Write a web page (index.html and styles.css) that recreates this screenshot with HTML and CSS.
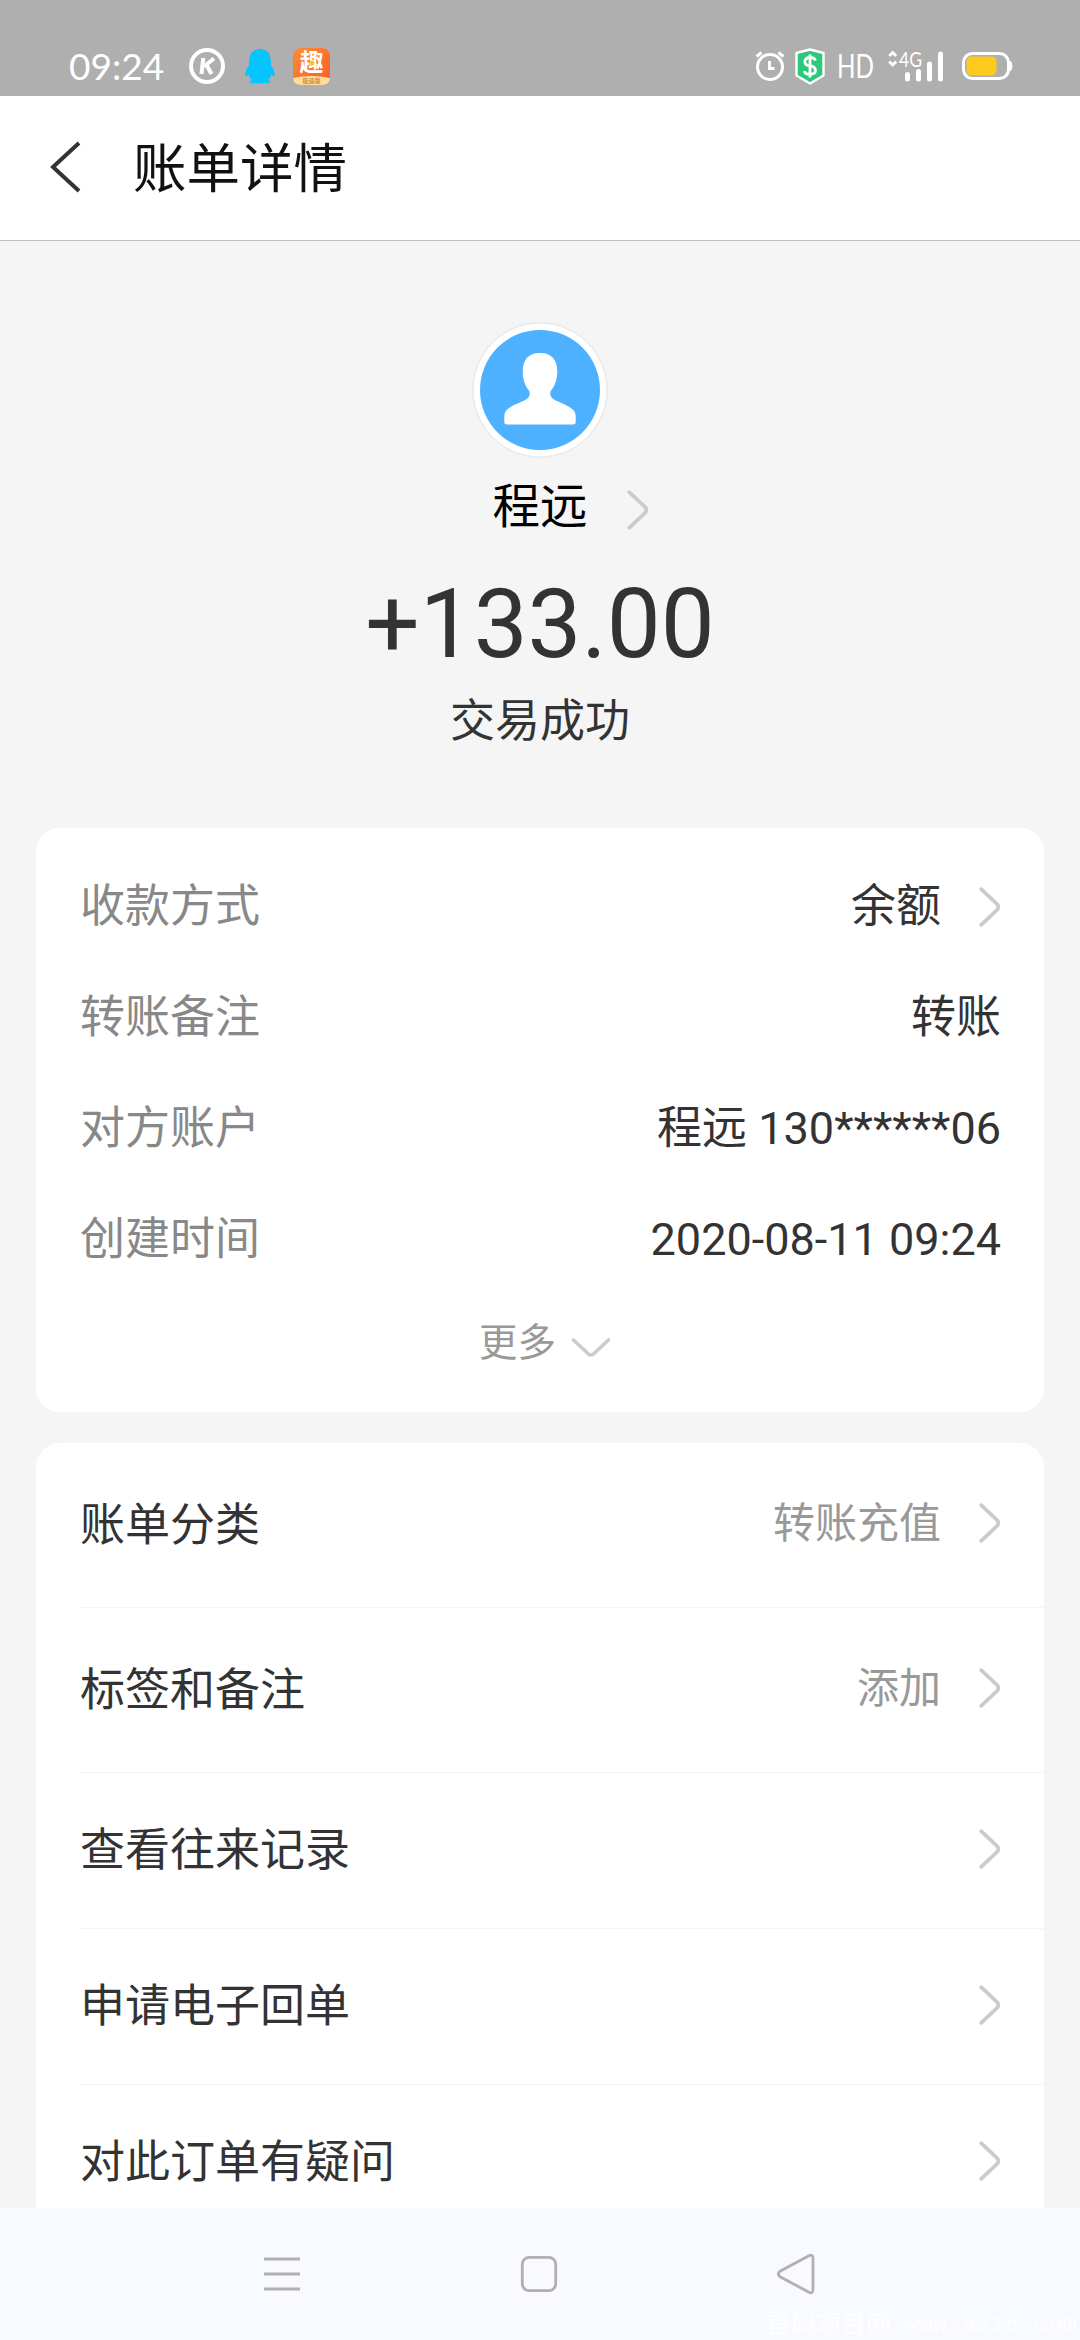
FILE: index.html
```html
<!DOCTYPE html>
<html lang="zh-CN">
<head>
<meta charset="utf-8">
<title>账单详情</title>
<link rel="stylesheet" href="styles.css">
</head>
<body>
<svg class="defs" aria-hidden="true">
  <symbol id="chevron" viewBox="0 0 22 40"><path d="M2.2 2.2 18.2 17.2Q20.4 20 18.2 22.8L2.2 37.8" fill="none" stroke="#cbcbcb" stroke-width="3.8" stroke-linecap="round"/></symbol>
</svg>

<div class="status">
  <div class="status-left">
    <span class="clock">09:24</span>
    <svg class="app-icon k-icon" viewBox="0 0 36 36"><circle cx="18" cy="18" r="16" fill="none" stroke="#fff" stroke-width="4"/><path d="M14.300 10 12.500 26M25 10.500 15 18.500M17.500 17 22.500 26" fill="none" stroke="#fff" stroke-width="4"/></svg>
    <svg class="app-icon qq-icon" viewBox="0 0 32 36"><path d="M16 1C9 1 5.3 6 5.3 12.500L5 17C3 20 1 24 1.300 27.500Q1.800 29.500 4.500 26.500Q5.500 30 8 32Q5.500 33 6 35L14 35.300H18L26 35Q26.500 33 24 32Q26.500 30 27.500 26.500Q30.200 29.500 30.700 27.500C31 24 29 20 27 17L26.700 12.500C26.700 6 23 1 16 1Z" fill="#06c4fd"/></svg>
    <svg class="app-icon" viewBox="0 0 37 37"><defs><linearGradient id="qu" x2="1" y2="1"><stop stop-color="#f98e36"/><stop offset="1" stop-color="#f95c2c"/></linearGradient></defs><rect width="37" height="37" rx="8" fill="url(#qu)"/><path d="M0 30Q18.500 26 37 30Q36.500 37 29 37H8Q.5 37 0 30Z" fill="#ffdf9b"/><text class="qu-text" x="18.500" y="23" text-anchor="middle">趣</text><circle cx="19" cy="15" r="2.600" fill="#ffc51d"/><text class="qu-sub" x="18.500" y="34.500" text-anchor="middle">极速版</text></svg>
  </div>
  <div class="status-right">
    <svg class="alarm" viewBox="0 0 30 34"><circle cx="15" cy="18" r="12.500" fill="none" stroke="#fff" stroke-width="3"/><path d="M1.500 7.500 6.500 3.500M28.500 7.500 23.500 3.500M14.500 12V19.500H19.500" fill="none" stroke="#fff" stroke-width="3"/></svg>
    <svg class="shield" viewBox="0 0 30 37"><path d="M15 1.500 28.500 5V27.500L15 35.500 1.500 27.500V5Z" fill="#2bc97c" stroke="#fff" stroke-width="2.400" stroke-linejoin="round"/><path d="M20.500 12.500Q19.500 9.500 15 9.500T9.800 13.500Q9.800 17.500 15 17.800T20.500 22.300Q20.500 26.300 15 26.300T9.500 23M15 6.500V29.500" fill="none" stroke="#fff" stroke-width="2.800"/></svg>
    <svg class="hd" viewBox="0 0 37 26"><text x="0" y="25" textLength="37" lengthAdjust="spacingAndGlyphs">HD</text></svg>
    <svg class="signal" viewBox="0 0 58 34"><path d="M2.200 6 5.700 2.500 9.200 6M2.200 11.500 5.700 15 9.200 11.500" fill="none" stroke="#fff" stroke-width="2.800"/><text x="12" y="17" textLength="23" lengthAdjust="spacingAndGlyphs">4G</text><path d="M20.500 24.500V29M31.500 21.500V29M42.500 14V29M53.500 4V29" stroke="#fff" stroke-width="5" stroke-linecap="round"/></svg>
    <svg class="battery" viewBox="0 0 50 28"><rect x="1.500" y="1.500" width="45" height="25" rx="9" fill="none" stroke="#fff" stroke-width="3"/><rect x="4.500" y="4.500" width="30" height="19" rx="5" fill="#fecb1c"/><path d="M48 9V19Q50 17.500 50 14T48 9Z" fill="#fff" stroke="#fff"/></svg>
  </div>
</div>

<header class="header">
  <svg class="back" viewBox="0 0 32 52"><path d="M29 2 3 26 29 50" fill="none" stroke="#333" stroke-width="4"/></svg>
  <h1 class="title">账单详情</h1>
</header>

<main class="content">
  <section class="hero">
    <svg class="avatar" viewBox="0 0 136 136"><circle cx="68" cy="68" r="68" fill="#ebebeb"/><circle cx="68" cy="68" r="66.300" fill="#fff"/><circle cx="68" cy="68" r="60" fill="#4eb1ff"/><path d="M68 31C56 31 50.700 38.500 50.700 49C50.700 57.500 53 64 57 68.500Q59.500 74 54 77.500C45 82.500 32.300 85 32.300 94V100Q32.300 102.500 35 102.500H101Q103.700 102.500 103.700 100V94C103.700 85 91 82.500 82 77.500Q76.500 74 79 68.500C83 64 85.300 57.500 85.300 49C85.300 38.500 80 31 68 31Z" fill="#fff"/></svg>
    <div class="payee"><span>程远</span><svg class="chevron"><use href="#chevron"/></svg></div>
    <div class="amount">+133.00</div>
    <div class="result">交易成功</div>
  </section>

  <section class="card details">
    <div class="detail"><span class="label">收款方式</span><span class="value">余额</span><svg class="chevron"><use href="#chevron"/></svg></div>
    <div class="detail"><span class="label">转账备注</span><span class="value">转账</span></div>
    <div class="detail"><span class="label">对方账户</span><span class="value">程远 130******06</span></div>
    <div class="detail"><span class="label">创建时间</span><span class="value">2020-08-11 09:24</span></div>
    <div class="more"><span>更多</span><svg class="down" viewBox="0 0 40 22"><path d="M2.500 3 17.500 17Q20 19 22.500 17L37.500 3" fill="none" stroke="#cbcbcb" stroke-width="3.600" stroke-linecap="round"/></svg></div>
  </section>

  <section class="card actions">
    <div class="action tall"><span>账单分类</span><span class="hint">转账充值</span><svg class="chevron"><use href="#chevron"/></svg></div>
    <div class="action tall"><span>标签和备注</span><span class="hint">添加</span><svg class="chevron"><use href="#chevron"/></svg></div>
    <div class="action"><span>查看往来记录</span><svg class="chevron"><use href="#chevron"/></svg></div>
    <div class="action"><span>申请电子回单</span><svg class="chevron"><use href="#chevron"/></svg></div>
    <div class="action"><span>对此订单有疑问</span><svg class="chevron"><use href="#chevron"/></svg></div>
  </section>
</main>

<nav class="nav">
  <svg viewBox="0 0 42 42"><path d="M3 6H39M3 21H39M3 36H39" stroke="#b0b0b0" stroke-width="3"/></svg>
  <svg viewBox="0 0 42 42"><rect x="4.300" y="4.300" width="33.400" height="33.400" rx="7" fill="none" stroke="#b0b0b0" stroke-width="2.800"/></svg>
  <svg viewBox="0 0 42 42"><path d="M33.500 3Q38 0.500 38 5.500V36.500Q38 41.500 33.500 39L5.500 24Q1 21 5.500 18Z" fill="none" stroke="#b0b0b0" stroke-width="2.800"/></svg>
  <div class="watermark"><span>首码项目网</span><span class="site">www.8318.com</span></div>
</nav>
</body>
</html>
```
FILE: styles.css
```css
* { box-sizing: border-box; }
body {
  margin: 0;
  width: 1080px;
  height: 2340px;
  overflow: hidden;
  display: flex;
  flex-direction: column;
  background: #f5f5f5;
  color: #333;
  font: 45px/1 Roboto, "Noto Sans CJK SC", sans-serif;
}
svg { display: block; flex: none; overflow: visible; }
.defs { position: absolute; width: 0; height: 0; }

.status {
  flex: none;
  height: 96px;
  padding: 36px 68px 0 69px;
  display: flex;
  justify-content: space-between;
  background: #afafaf;
  color: #fff;
}
.status-left, .status-right { display: flex; align-items: center; height: 60px; }
.clock { width: 120px; font: 37px/60px Lato, sans-serif; }
.app-icon { width: 37px; height: 37px; }
.k-icon { width: 36px; height: 36px; }
.qq-icon { width: 32px; height: 36px; margin: 0 17px 0 19px; }
.qu-text { font: 700 24px "Noto Sans CJK SC", sans-serif; fill: #fff; }
.qu-sub { font: 700 6px "Noto Sans CJK SC", sans-serif; fill: #d8893f; }
.alarm { width: 30px; height: 34px; margin-right: 10px; }
.shield { width: 30px; height: 37px; margin-right: 12px; }
.hd { width: 37px; height: 26px; margin-right: 13px; }
.hd text { font: 33px Lato, sans-serif; fill: #fff; }
.signal { width: 58px; height: 34px; margin: 2px 17px 0 0; }
.signal text { font: 22px Lato, sans-serif; fill: #fff; }
.battery { width: 50px; height: 28px; }

.header {
  flex: none;
  height: 145px;
  padding: 0 50px 2px;
  display: flex;
  align-items: center;
  gap: 51px;
  background: #fff;
  border-bottom: 1px solid #c0c0c0;
}
.back { width: 32px; height: 52px; }
.title { margin: 5px 0 0; color: #111; font-size: 53.500px; font-weight: 400; line-height: 80px; }

.content { flex: 1; min-height: 0; overflow: hidden; padding: 0 36px; }
.hero { height: 587px; padding-top: 81px; display: flex; flex-direction: column; align-items: center; }
.avatar { width: 136px; height: 136px; }
.payee {
  display: grid;
  grid-template-columns: 1fr auto 1fr;
  align-items: center;
  width: 100%;
  height: 70px;
  margin-top: 15px;
  color: #000;
  font-size: 47.500px;
}
.payee span { grid-column: 2; }
.payee .chevron { margin: 3px 0 0 39px; }
.amount { height: 96px; margin-top: 33px; font-size: 96px; line-height: 96px; }
.result { margin-top: 20px; line-height: 60px; }

.chevron { width: 22px; height: 40px; }
.card { background: #fff; border-radius: 24px; }
.details { height: 584px; padding: 23px 43px 0 44px; }
.detail { height: 111px; display: flex; align-items: center; }
.label { color: #888; }
.value { margin-left: auto; }
.detail .chevron { margin-left: 38px; }
.more {
  height: 97px;
  padding-left: 9px;
  display: flex;
  justify-content: center;
  align-items: center;
  gap: 15px;
  color: #999;
  font-size: 38.500px;
}
.down { width: 40px; height: 22px; margin-top: 8px; }

.actions { margin-top: 31px; padding-left: 44px; }
.action {
  height: 156px;
  padding-right: 43px;
  display: flex;
  align-items: center;
  justify-content: space-between;
  border-bottom: 1px solid #f5f5f5;
}
.action.tall { height: 165px; }
.action .chevron { margin-bottom: 4px; }
.hint { margin: 0 38px 3px auto; color: #999; font-size: 42px; }

.nav {
  position: relative;
  flex: none;
  height: 132px;
  padding: 0 263px 0 261px;
  display: flex;
  justify-content: space-between;
  align-items: center;
  background: #f9faff;
}
.nav svg { width: 42px; height: 42px; }
.watermark {
  position: absolute;
  left: 766px;
  bottom: 0;
  display: flex;
  gap: 13px;
  color: #fdfeff;
  font-size: 25px;
  line-height: 30px;
  white-space: nowrap;
}
.site { font: 24px/30px "Liberation Mono", monospace; }
```
